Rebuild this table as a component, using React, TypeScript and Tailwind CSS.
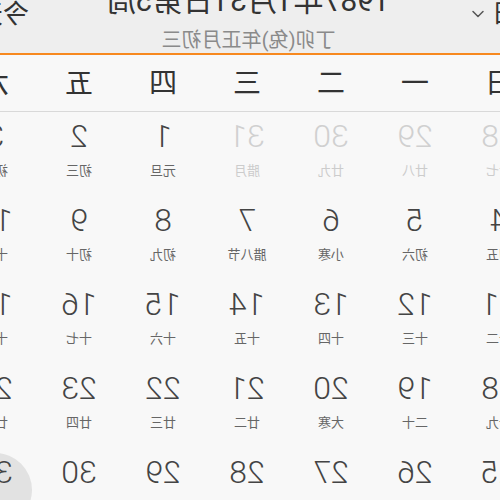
import React from 'react';
import { ChevronDown } from 'lucide-react';

type Day = { d: number; lunar: string; other?: boolean; selected?: boolean };

const weekdays = ['日', '一', '二', '三', '四', '五', '六'];

const weeks: Day[][] = [
  [
    { d: 28, lunar: '廿七', other: true },
    { d: 29, lunar: '廿八', other: true },
    { d: 30, lunar: '廿九', other: true },
    { d: 31, lunar: '腊月', other: true },
    { d: 1, lunar: '元旦' },
    { d: 2, lunar: '初三' },
    { d: 3, lunar: '初四' },
  ],
  [
    { d: 4, lunar: '初五' },
    { d: 5, lunar: '初六' },
    { d: 6, lunar: '小寒' },
    { d: 7, lunar: '腊八节' },
    { d: 8, lunar: '初九' },
    { d: 9, lunar: '初十' },
    { d: 10, lunar: '十一' },
  ],
  [
    { d: 11, lunar: '十二' },
    { d: 12, lunar: '十三' },
    { d: 13, lunar: '十四' },
    { d: 14, lunar: '十五' },
    { d: 15, lunar: '十六' },
    { d: 16, lunar: '十七' },
    { d: 17, lunar: '十八' },
  ],
  [
    { d: 18, lunar: '十九' },
    { d: 19, lunar: '二十' },
    { d: 20, lunar: '大寒' },
    { d: 21, lunar: '廿二' },
    { d: 22, lunar: '廿三' },
    { d: 23, lunar: '廿四' },
    { d: 24, lunar: '廿五' },
  ],
  [
    { d: 25, lunar: '廿六' },
    { d: 26, lunar: '廿七' },
    { d: 27, lunar: '廿八' },
    { d: 28, lunar: '除夕' },
    { d: 29, lunar: '春节' },
    { d: 30, lunar: '初二' },
    { d: 31, lunar: '初三', selected: true },
  ],
];

const App: React.FC = () => {
  return (
    // the screenshot is a mirror image, so the page is drawn normally and flipped
    <div className="w-[500px] h-[500px] overflow-hidden bg-[#f8f8f8] [transform:scaleX(-1)] font-['Roboto','Noto_Sans_CJK_SC',sans-serif]">
      <div className="w-[588px] -ml-[41px]">
        {/* Header */}
        <div className="h-[55px] bg-[#eeeeee] border-b-2 border-[#f7891f] flex items-start justify-between px-[24px] overflow-hidden">
          <div className="flex items-center gap-[4px] text-[#333] text-[25px] leading-[26px] mt-[1px]">
            <span>日</span>
            <ChevronDown className="w-[20px] h-[20px] text-[#555]" strokeWidth={1.8} />
          </div>
          <div className="flex flex-col items-center -mt-[16px]">
            <div className="text-[30px] leading-[34px] text-[#333]">1987年1月31日第5周</div>
            <div className="text-[20px] leading-[24px] text-[#8a8a8a] mt-[10px]">丁卯(兔)年正月初三</div>
          </div>
          <div className="text-[26px] leading-[26px] text-[#333] mt-[1px]">今天</div>
        </div>

        {/* Weekday row */}
        <div className="grid grid-cols-7 h-[57px] border-b border-[#d9d9d9] items-center">
          {weekdays.map((w) => (
            <div key={w} className="text-center text-[28px] leading-none text-[#333] pt-[2px]">
              {w}
            </div>
          ))}
        </div>

        {/* Dates */}
        <div className="grid grid-cols-7">
          {weeks.flat().map((day, i) => (
            <div key={i} className="h-[84px] flex items-center justify-center">
              <div
                className={
                  'w-[74px] h-[74px] rounded-full flex flex-col items-center ' +
                  (day.selected ? 'bg-[#e2e2e2]' : '')
                }
              >
                <div
                  className={
                    'mt-[3px] text-[32px] leading-[32px] font-light ' +
                    (day.other ? 'text-[#d0d0d0]' : 'text-[#444]')
                  }
                >
                  {day.d}
                </div>
                <div
                  className={
                    'mt-[12px] text-[13px] leading-[14px] ' +
                    (day.other ? 'text-[#cccccc]' : 'text-[#666]')
                  }
                >
                  {day.lunar}
                </div>
              </div>
            </div>
          ))}
        </div>
      </div>
    </div>
  );
};

export default App;
